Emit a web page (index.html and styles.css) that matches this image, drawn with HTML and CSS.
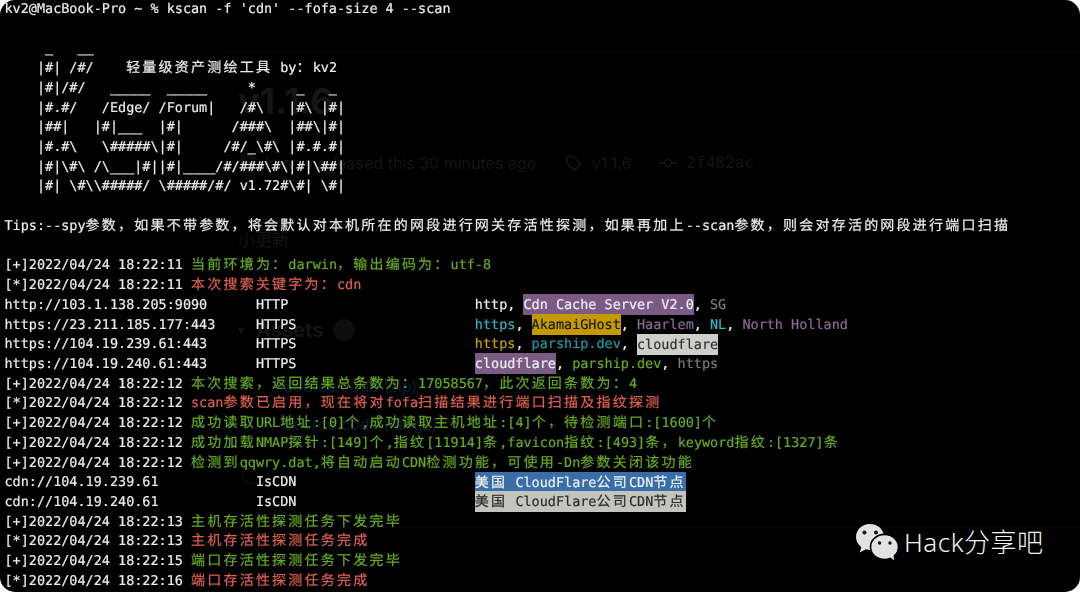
FILE: index.html
```html
<!DOCTYPE html>
<html lang="zh-CN">
<head>
<meta charset="utf-8">
<title>kscan</title>
<link rel="stylesheet" href="styles.css">
</head>
<body>
<main class="screen">
  <section class="ghost">
    <div class="g-title">v1.1.6</div>
    <div class="g-meta">
      <span class="g-avatar"></span>
      <span class="g-rel">lcvvvv released this 30 minutes ago</span>
      <svg class="g-icon" width="18" height="18" viewBox="0 0 16 16"><path d="M1.5 2.5v5l7 7 5.500-5.500-7-7z M4.500 5.200h.1" fill="none" stroke="#161616" stroke-width="1.400"/></svg>
      <span class="g-tag">v1.1.6</span>
      <svg class="g-icon" width="20" height="18" viewBox="0 0 20 16"><circle cx="10" cy="8" r="3.500" fill="none" stroke="#161616" stroke-width="1.400"/><path d="M0 8h6M14 8h6" stroke="#161616" stroke-width="1.400"/></svg>
      <span class="g-hash">2f482ac</span>
    </div>
    <div class="g-note">小更新</div>
    <div class="g-assets"><span class="g-arrow">▾</span><span class="g-head">Assets</span><span class="g-badge">2</span></div>
    <div class="g-link">Source code (zip)</div>
    <div class="g-link">Source code (tar.gz)</div>
    <div class="g-smile"></div>
  </section>

  <section class="term">
    <div class="row">kv2@MacBook-Pro ~ % kscan -f 'cdn' --fofa-size 4 --scan</div>
    <div class="row"></div>
    <div class="row">     _   __</div>
    <div class="row">    |#| /#/    <span class="c">轻量级资产测绘工具</span> by<span class="c">：</span>kv2</div>
    <div class="row">    |#|/#/   _____  _____     *     _   _</div>
    <div class="row">    |#.#/   /Edge/ /Forum|   /#\   |#\ |#|</div>
    <div class="row">    |##|   |#|___  |#|      /###\  |##\|#|</div>
    <div class="row">    |#.#\   \#####\|#|     /#/_\#\ |#.#.#|</div>
    <div class="row">    |#|\#\ /\___|#||#|____/#/###\#\|#|\##|</div>
    <div class="row">    |#| \#\\#####/ \#####/#/ v1.72#\#| \#|</div>
    <div class="row"></div>
    <div class="row">Tips:--spy<span class="c">参数，如果不带参数，将会默认对本机所在的网段进行网关存活性探测，如果再加上</span>--scan<span class="c">参数，则会对存活的网段进行端口扫描</span></div>
    <div class="row"></div>
    <div class="row">[+]2022/04/24 18:22:11 <span class="green"><span class="c">当前环境为：</span>darwin<span class="c">，输出编码为：</span>utf-8</span></div>
    <div class="row">[*]2022/04/24 18:22:11 <span class="red"><span class="c">本次搜索关键字为：</span>cdn</span></div>
    <div class="row">http://103.1.138.205:9090      HTTP                       http, <span class="hl bg-purple">Cdn Cache Server V2.0</span>, <span class="dim">SG</span></div>
    <div class="row">https://23.211.185.177:443     HTTPS                      <span class="cyan">https</span>, <span class="hl bg-yellow">AkamaiGHost</span>, <span class="purple">Haarlem</span>, <span class="cyan">NL</span>, <span class="purple">North Holland</span></div>
    <div class="row">https://104.19.239.61:443      HTTPS                      <span class="yellow">https</span>, <span class="teal">parship.dev</span>, <span class="hl bg-gray">cloudflare</span></div>
    <div class="row">https://104.19.240.61:443      HTTPS                      <span class="hl bg-purple">cloudflare</span>, <span class="green">parship.dev</span>, <span class="dim">https</span></div>
    <div class="row">[+]2022/04/24 18:22:12 <span class="green"><span class="c">本次搜索，返回结果总条数为：</span>17058567<span class="c">，此次返回条数为：</span>4</span></div>
    <div class="row">[*]2022/04/24 18:22:12 <span class="red">scan<span class="c">参数已启用，现在将对</span>fofa<span class="c">扫描结果进行端口扫描及指纹探测</span></span></div>
    <div class="row">[+]2022/04/24 18:22:12 <span class="green"><span class="c">成功读取</span>URL<span class="c">地址</span>:[0]<span class="c">个</span>,<span class="c">成功读取主机地址</span>:[4]<span class="c">个，待检测端口</span>:[1600]<span class="c">个</span></span></div>
    <div class="row">[+]2022/04/24 18:22:12 <span class="green"><span class="c">成功加载</span>NMAP<span class="c">探针</span>:[149]<span class="c">个</span>,<span class="c">指纹</span>[11914]<span class="c">条</span>,favicon<span class="c">指纹</span>:[493]<span class="c">条，</span>keyword<span class="c">指纹</span>:[1327]<span class="c">条</span></span></div>
    <div class="row">[+]2022/04/24 18:22:12 <span class="green"><span class="c">检测到</span>qqwry.dat,<span class="c">将自动启动</span>CDN<span class="c">检测功能，可使用</span>-Dn<span class="c">参数关闭该功能</span></span></div>
    <div class="row">cdn://104.19.239.61            IsCDN                      <span class="hl bg-blue"><span class="c">美国</span> CloudFlare<span class="c">公司</span>CDN<span class="c">节点</span></span></div>
    <div class="row">cdn://104.19.240.61            IsCDN                      <span class="hl bg-silver"><span class="c">美国</span> CloudFlare<span class="c">公司</span>CDN<span class="c">节点</span></span></div>
    <div class="row">[+]2022/04/24 18:22:13 <span class="green c">主机存活性探测任务下发完毕</span></div>
    <div class="row">[*]2022/04/24 18:22:13 <span class="red c">主机存活性探测任务完成</span></div>
    <div class="row">[+]2022/04/24 18:22:15 <span class="green c">端口存活性探测任务下发完毕</span></div>
    <div class="row">[*]2022/04/24 18:22:16 <span class="red c">端口存活性探测任务完成</span></div>
  </section>

  <aside class="mark">
    <svg class="mark-icon" width="44" height="38" viewBox="0 0 44 38">
      <path d="M15 1C7 1 1 6.800 1 14c0 4.200 2 7.700 5.300 10.100L4.800 29.500l6-3.200c1.300.4 2.700.6 4.200.6 8 0 14-5.800 14-13S23 1 15 1z" fill="#e2e2e2"/>
      <ellipse cx="29.500" cy="24" rx="14" ry="12.600" fill="#e2e2e2" stroke="#000" stroke-width="1.600"/>
      <path d="M35 34l4 3.500-.5-5.500z" fill="#e2e2e2"/>
      <circle cx="9.500" cy="9.500" r="2" fill="#111"/>
      <circle cx="21" cy="9.500" r="2" fill="#111"/>
      <circle cx="24.500" cy="20" r="1.700" fill="#111"/>
      <circle cx="35" cy="20" r="1.700" fill="#111"/>
    </svg>
    <span class="mark-text">Hack分享吧</span>
  </aside>
</main>
</body>
</html>
```

FILE: styles.css
```css
* { box-sizing: border-box; }

html, body {
  margin: 0;
  height: 592px;
  background: #fff;
  overflow: hidden;
}

.screen {
  position: relative;
  display: grid;
  width: 1080px;
  height: 592px;
  background: #000;
  border-radius: 15px;
  overflow: hidden;
}

.ghost,
.term {
  grid-area: 1 / 1;
  min-width: 0;
}

/* Faint page showing through the terminal */
.ghost {
  margin: 52px 0 64px 218px;
  padding: 26px 0 0 19px;
  border-top: 1px solid #070707;
  border-left: 1px solid #070707;
  border-bottom: 1px solid #070707;
  font-family: Inter, "Noto Sans CJK SC", sans-serif;
  color: #141414;
}

.g-title {
  font-size: 36px;
  line-height: 44px;
  font-weight: 700;
  color: #151515;
}

.g-meta {
  display: flex;
  align-items: center;
  margin-top: 28px;
  font-size: 16px;
  line-height: 24px;
}

.g-avatar {
  flex: none;
  width: 20px;
  height: 20px;
  margin-right: 7px;
  border-radius: 50%;
  background: #0b0b0b;
}

.g-rel { width: 300px; white-space: nowrap; }
.g-icon { flex: none; }
.g-tag { margin: 0 27px 0 9px; }
.g-hash { margin-left: 8px; font-family: "DejaVu Sans Mono", monospace; font-size: 16px; }

.g-note {
  margin-top: 53px;
  font-size: 17px;
  line-height: 24px;
}

.g-assets {
  display: flex;
  align-items: center;
  margin: 64px 0 30px;
  font-size: 20px;
  line-height: 28px;
  font-weight: 700;
}

.g-arrow { width: 18px; font-size: 12px; }

.g-badge {
  display: flex;
  align-items: center;
  justify-content: center;
  width: 22px;
  height: 22px;
  margin-left: 10px;
  border-radius: 50%;
  background: #0d0d0d;
  font-size: 12px;
  font-weight: 400;
}

.g-link {
  margin: 14px 0 0 45px;
  font-size: 16px;
  line-height: 24px;
  color: #0c1a30;
}

.g-smile {
  width: 16px;
  height: 16px;
  margin: 32px 0 0 4px;
  border: 1px solid #141414;
  border-radius: 50%;
}

/* Terminal output */
.term {
  margin-top: -2px;
  padding-left: 4.500px;
  font-family: "DejaVu Sans Mono", monospace;
  font-size: 13.470px;
  color: #ececec;
  -webkit-text-stroke: 0.2px;
  text-rendering: geometricPrecision;
  filter: blur(0.3px);
}

.row {
  height: 19.720px;
  line-height: 19.720px;
  white-space: pre;
}

/* Same line metrics for every row, with or without CJK text */
.row::before {
  content: "";
  font-family: "Noto Sans CJK SC", sans-serif;
}

.c {
  font-family: "Noto Sans CJK SC", sans-serif;
  font-size: 14px;
  letter-spacing: 2.220px;
}

.green { color: #67ab22; }
.red { color: #e0604e; }
.cyan { color: #2fb3c0; }
.teal { color: #1f9aa8; }
.yellow { color: #c89d00; }
.purple { color: #8c6a96; }
.dim { color: #7a7a7a; }

.hl { padding: 2.500px 0; }
.bg-purple { background: #7c5a86; color: #eeeeee; }
.bg-yellow { background: #c49a00; color: #1a1a1a; }
.bg-gray { background: #cdcfc9; color: #333; }
.bg-blue { background: #3a6ea9; color: #eeeeee; }
.bg-silver { background: #c3c4be; color: #2c2c2c; }

/* WeChat watermark */
.mark {
  position: absolute;
  left: 855px;
  top: 523px;
  display: flex;
  align-items: center;
  gap: 5px;
  color: #f2f2f2;
}

.mark-icon { flex: none; }

.mark-text {
  font-family: "Noto Sans", "Noto Sans CJK SC", sans-serif;
  font-size: 26px;
  font-weight: 300;
  letter-spacing: 0.500px;
  line-height: 38px;
  white-space: nowrap;
}
```
